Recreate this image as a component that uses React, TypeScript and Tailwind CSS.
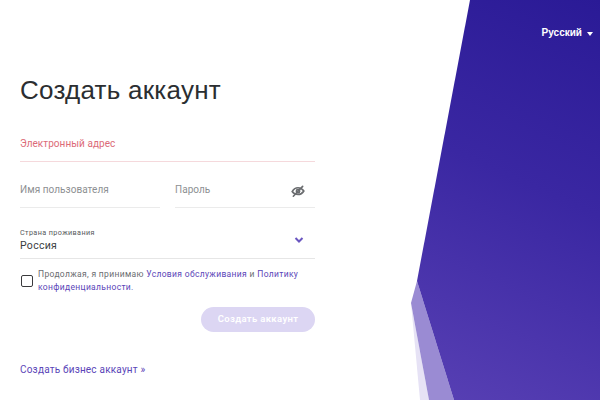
export default function App() {
  return (
    <div className="relative w-[600px] h-[400px] overflow-hidden bg-white font-['Roboto','Noto_Sans',sans-serif]">
      <svg className="absolute inset-0" width="600" height="400" viewBox="0 0 600 400">
        <defs>
          <linearGradient id="g" x1="600" y1="0" x2="420" y2="400" gradientUnits="userSpaceOnUse">
            <stop offset="0" stopColor="#2a1a96" />
            <stop offset="0.45" stopColor="#3a27a2" />
            <stop offset="1" stopColor="#5840b4" />
          </linearGradient>
        </defs>
        <polygon points="411,303 420,400 429,400" fill="#e6e2f5" />
        <polygon points="417,281 411,303 429,400 454,400" fill="#9a8bd3" />
        <polygon points="470,0 600,0 600,400 454,400 417,281" fill="url(#g)" />
      </svg>

      <div className="relative flex justify-end pt-[26px] pr-[7px]">
        <div className="flex items-center gap-[5px] text-white text-[10px] leading-[13px] font-bold font-['Liberation_Sans',sans-serif]">
          <span>Русский</span>
          <span className="w-0 h-0 mt-[2px] border-x-[3px] border-x-transparent border-t-[4px] border-t-white" />
        </div>
      </div>

      <div className="relative w-[295px] ml-[20px] mt-[35px] flex flex-col">
        <h1 className="font-['Liberation_Sans',sans-serif] text-[26px] leading-[32px] text-[#2b2e31] font-normal tracking-[0.25px]">
          Создать аккаунт
        </h1>

        <div className="mt-[30px] h-[26px] border-b border-[#f5d9dc] text-[10px] leading-[16px] tracking-[0.05px] text-[#dc6b78]">
          Электронный адрес
        </div>

        <div className="mt-[20px] flex gap-[15px]">
          <div className="w-[140px] h-[26px] border-b border-[#ebebeb] text-[10px] leading-[16px] tracking-[0.05px] text-[#8d8f92]">
            Имя пользователя
          </div>
          <div className="w-[140px] h-[26px] border-b border-[#ebebeb] flex justify-between pr-[10px] text-[10px] leading-[16px] tracking-[0.05px] text-[#8d8f92]">
            <span>Пароль</span>
            <svg width="14" height="14" viewBox="0 0 24 24" fill="none" stroke="#6a6c6f" strokeWidth="2.800" strokeLinecap="round" className="mt-[2px]">
              <path d="M2 13c2.500-4 6-6.500 10-6.500s7.500 2 10 5.500c-2.500 4-6 6-10 6s-7.500-1.500-10-5z" />
              <circle cx="12" cy="12.500" r="2.800" />
              <path d="M20 4L4 21" />
            </svg>
          </div>
        </div>

        <div className="mt-[19px] h-[32px] border-b border-[#e6e6e6] flex justify-between pr-[11px]">
          <div className="flex flex-col">
            <span className="text-[7.200px] leading-[12px] tracking-[0.4px] text-[#55585b]">Страна проживания</span>
            <span className="text-[10.500px] leading-[14px] tracking-[0.3px] text-[#3a3d40]">Россия</span>
          </div>
          <svg width="10" height="8" viewBox="0 0 10 8" fill="none" stroke="#6a56c0" strokeWidth="2" className="mt-[9px]">
            <path d="M1.500 2 L5 5.500 L8.500 2" />
          </svg>
        </div>

        <div className="mt-[9px] flex gap-[5px]">
          <div className="w-[12px] h-[12px] ml-[1px] mt-[7px] shrink-0 rounded-[2px] border-[1.5px] border-[#3a3a3d]" />
          <div className="w-[262px] text-[8.500px] leading-[12.500px] tracking-[0.33px] text-[#6b6d70]">
            <div className="flex gap-[2.500px] whitespace-nowrap">
              <span>Продолжая, я принимаю</span>
              <span className="text-[#5a45b8]">Условия обслуживания</span>
              <span>и</span>
              <span className="text-[#5a45b8]">Политику</span>
            </div>
            <div className="text-[#5a45b8]">конфиденциальности.</div>
          </div>
        </div>

        <div className="mt-[14px] flex justify-end">
          <div className="w-[114px] h-[25px] rounded-full bg-[#dcd6f3] flex items-center justify-center text-white text-[9.500px] font-semibold tracking-[0.35px]">
            Создать аккаунт
          </div>
        </div>

        <div className="mt-[31px] text-[10px] leading-[14px] tracking-[0.2px] text-[#5a45b8]">
          Создать бизнес аккаунт »
        </div>
      </div>
    </div>
  );
}
